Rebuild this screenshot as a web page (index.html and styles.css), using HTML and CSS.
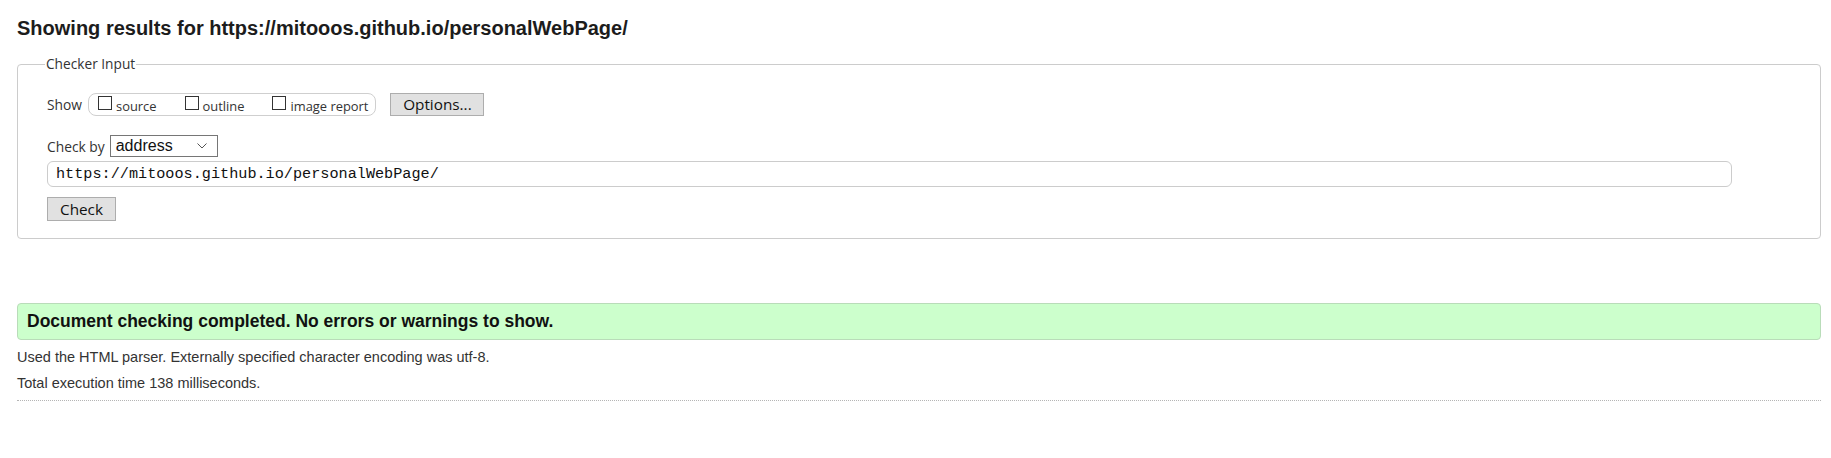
FILE: index.html
```html
<!DOCTYPE html>
<html lang="en">
<head>
<meta charset="utf-8">
<title>Showing results for https://mitooos.github.io/personalWebPage/ - Nu Html Checker</title>
<link rel="stylesheet" href="styles.css">
</head>
<body>
<div class="page">
  <h2 class="results-title">Showing results for https://mitooos.github.io/personalWebPage/</h2>
  <form class="checker-form">
    <fieldset class="checker-input">
      <legend>Checker Input</legend>
      <div class="show-row">
        <span class="row-label">Show</span>
        <span class="show-options">
          <label class="opt"><input type="checkbox" class="box"><span>source</span></label>
          <label class="opt"><input type="checkbox" class="box"><span>outline</span></label>
          <label class="opt"><input type="checkbox" class="box"><span>image report</span></label>
        </span>
        <button type="button" class="btn btn-options">Options...</button>
      </div>
      <div class="checkby-row">
        <span class="row-label">Check by</span>
        <span class="select">
          <span class="select-value">address</span>
          <svg class="chevron" width="10" height="6" viewBox="0 0 10 6"><path d="M0.5 0.5 L5 5 L9.5 0.5" fill="none" stroke="#555" stroke-width="1"/></svg>
        </span>
      </div>
      <div class="url-row">
        <input class="url" type="text" value="https://mitooos.github.io/personalWebPage/">
      </div>
      <div class="submit-row">
        <button type="button" class="btn btn-check">Check</button>
      </div>
    </fieldset>
  </form>
  <div class="success">Document checking completed. No errors or warnings to show.</div>
  <p class="details">Used the HTML parser. Externally specified character encoding was utf-8.</p>
  <p class="details">Total execution time 138 milliseconds.</p>
  <hr class="dotted">
</div>
</body>
</html>
```
FILE: styles.css
```css
html, body {
  margin: 0;
  padding: 0;
  background: #fff;
}
body {
  font-family: "Liberation Sans", Arial, sans-serif;
  color: #333;
}
.page {
  padding: 0 10px 0 17px;
}
.results-title {
  margin: 17px 0 0;
  font-size: 20px;
  line-height: 23px;
  font-weight: bold;
  color: #1c1c1c;
}
.checker-form {
  margin: 0;
}
.checker-input {
  margin: 15px 0 0;
  padding: 19px 29px 17px 29px;
  border: 1px solid #cccccc;
  border-radius: 4px;
  min-width: 0;
}
.checker-input legend {
  padding: 0 1px;
  margin-left: -2px;
  font-family: "Open Sans", sans-serif;
  font-size: 13.7px;
  line-height: 18px;
  color: #333;
}
.row-label {
  font-family: "Open Sans", sans-serif;
  font-size: 13.8px;
  color: #333;
}
.show-row {
  display: flex;
  align-items: center;
  height: 24px;
}
.show-options {
  display: flex;
  align-items: center;
  margin-left: 6px;
  height: 21px;
  padding: 0 7px 0 9px;
  border: 1px solid #cfcfcf;
  border-radius: 8px;
}
.opt {
  display: flex;
  align-items: center;
  margin-right: 28px;
  font-family: "Open Sans", sans-serif;
  font-size: 12.9px;
  color: #333;
}
.opt:last-child {
  margin-right: 0;
}
.opt span {
  margin-top: 3px;
}
.box {
  appearance: none;
  -webkit-appearance: none;
  width: 14px;
  height: 14px;
  margin: -3px 4px 0 0;
  border: 1px solid #333;
  background: #fff;
  border-radius: 0;
}
.btn {
  font-family: "Open Sans", sans-serif;
  color: #111;
  background: #e1e1e1;
  border: 1px solid #adadad;
  border-radius: 0;
  padding: 0;
  cursor: default;
}
.btn-options {
  margin-left: 14px;
  width: 94px;
  height: 23px;
  font-size: 15.3px;
  line-height: 21px;
}
.checkby-row {
  display: flex;
  align-items: center;
  margin-top: 19px;
}
.select {
  display: flex;
  align-items: center;
  justify-content: space-between;
  margin-left: 5px;
  width: 108px;
  height: 22px;
  padding: 0 10px 0 5px;
  box-sizing: border-box;
  border: 1px solid #767676;
  background: #fff;
}
.select-value {
  font-family: "Liberation Sans", Arial, sans-serif;
  font-size: 16px;
  color: #111;
}
.url-row {
  margin-top: 4px;
  display: flex;
}
.url {
  width: 1685px;
  height: 26px;
  box-sizing: border-box;
  padding: 0 8px;
  border: 1px solid #cccccc;
  border-radius: 6px;
  font-family: "Liberation Mono", "DejaVu Sans Mono", monospace;
  font-size: 15.2px;
  color: #111;
  outline: none;
}
.submit-row {
  margin-top: 10px;
  display: flex;
}
.btn-check {
  width: 69px;
  height: 24px;
  font-size: 15.3px;
  line-height: 22px;
}
.success {
  margin-top: 64px;
  height: 37px;
  box-sizing: border-box;
  padding: 0 9px;
  display: flex;
  align-items: center;
  background: #ccffcc;
  border: 1px solid #b9dcb9;
  border-radius: 4px;
  font-family: "Liberation Sans", Arial, sans-serif;
  font-weight: bold;
  font-size: 17.5px;
  color: #111;
}
.details {
  margin: 0;
  font-size: 14.5px;
  line-height: 26px;
  color: #333;
}
.success + .details {
  margin-top: 4px;
}
.dotted {
  margin: 4px 0 0;
  border: 0;
  border-top: 1px dotted #b5b5b5;
  height: 0;
}
```
